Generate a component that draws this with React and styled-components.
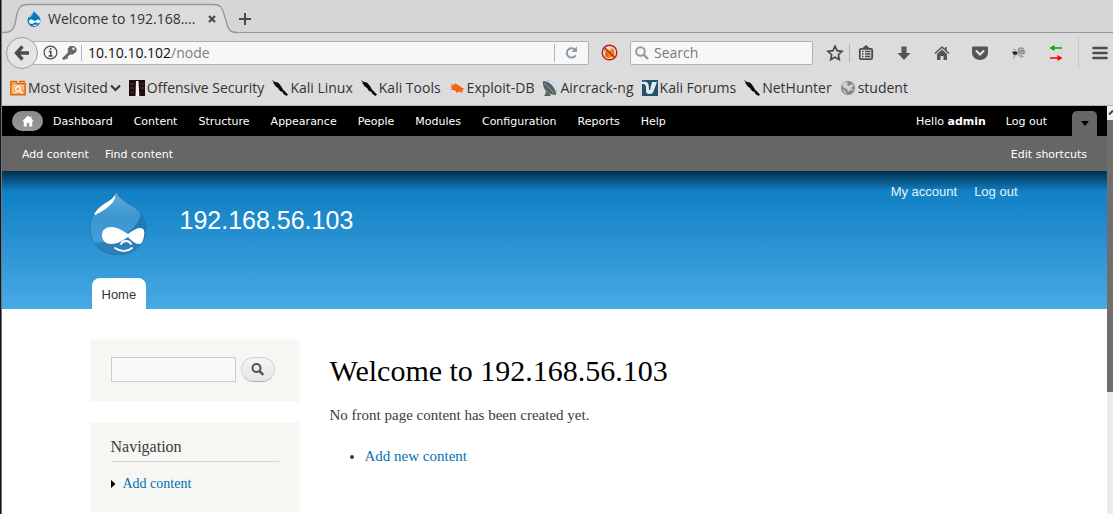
import React from 'react';
import styled, { createGlobalStyle } from 'styled-components';

const bookmarks = [
  { label: 'Most Visited', icon: 'folder', menu: true },
  { label: 'Offensive Security', icon: 'offsec' },
  { label: 'Kali Linux', icon: 'kali' },
  { label: 'Kali Tools', icon: 'kali' },
  { label: 'Exploit-DB', icon: 'exploit' },
  { label: 'Aircrack-ng', icon: 'aircrack' },
  { label: 'Kali Forums', icon: 'forums' },
  { label: 'NetHunter', icon: 'kali' },
  { label: 'student', icon: 'globe' },
];

const adminLinks = [
  'Dashboard',
  'Content',
  'Structure',
  'Appearance',
  'People',
  'Modules',
  'Configuration',
  'Reports',
  'Help',
];

const App = () => (
  <Window>
    <GlobalStyle />
    <TabStrip>
      <Tab>
        <TabShape />
        <Favicon />
        <TabTitle>Welcome to 192.168....</TabTitle>
        <PlainButton aria-label="Close tab">
          <svg width="8" height="8" viewBox="0 0 8 8">
            <path d="M1 1l6 6M7 1L1 7" stroke="#4a4a4a" strokeWidth="2.2" />
          </svg>
        </PlainButton>
      </Tab>
      <PlainButton aria-label="New tab">
        <svg width="12" height="12" viewBox="0 0 12 12">
          <path d="M6 0v12M0 6h12" stroke="#4a4a4a" strokeWidth="2" />
        </svg>
      </PlainButton>
    </TabStrip>
    <NavBar />
    <Bookmarks>
      {bookmarks.map((item) => (
        <Bookmark href="#" key={item.label}>
          <BookmarkIcon name={item.icon} />
          {item.label}
          {item.menu && (
            <svg width="11" height="8" viewBox="0 0 11 8">
              <path d="M1 1.500l4.500 4.500L10 1.500" fill="none" stroke="#3a3a3a" strokeWidth="2.2" />
            </svg>
          )}
        </Bookmark>
      ))}
    </Bookmarks>
    <Viewport>
      <Page>
        <AdminBar>
          <HomeLink href="#" aria-label="Home">
            <svg width="12" height="12" viewBox="0 0 12 12">
              <path d="M6 .5L0 6.5h1.8v5h3V8h2.4v3.5h3v-5H12L9.500 4V1.500H8.200v1.200z" fill="#fff" />
            </svg>
          </HomeLink>
          {adminLinks.map((label) => (
            <AdminLink href="#" key={label}>
              {label}
            </AdminLink>
          ))}
          <AdminUser>
            <AdminLink href="#">
              Hello <strong>admin</strong>
            </AdminLink>
            <AdminLink href="#">Log out</AdminLink>
            <DrawerToggle aria-label="Hide shortcuts">
              <svg width="8" height="5" viewBox="0 0 8 5">
                <path d="M0 0h8L4 5z" fill="#000" />
              </svg>
            </DrawerToggle>
          </AdminUser>
        </AdminBar>
        <Shortcuts>
          <AdminLink href="#">Add content</AdminLink>
          <AdminLink href="#">Find content</AdminLink>
          <EditLink href="#">Edit shortcuts</EditLink>
        </Shortcuts>
        <Header>
          <HeaderInner>
            <Branding>
              <DrupalLogo />
              <SiteName href="#">192.168.56.103</SiteName>
              <UserMenu>
                <UserLink href="#">My account</UserLink>
                <UserLink href="#">Log out</UserLink>
              </UserMenu>
            </Branding>
            <MainTab href="#">Home</MainTab>
          </HeaderInner>
        </Header>
        <Main>
          <Sidebar>
            <SearchBlock>
              <SearchInput type="text" aria-label="Search this site" />
              <SearchButton aria-label="Search">
                <svg width="13" height="13" viewBox="0 0 13 13">
                  <circle cx="5.5" cy="5" r="4" fill="none" stroke="#505050" strokeWidth="2" />
                  <path d="M8.300 7.800l4 4" stroke="#505050" strokeWidth="2.4" />
                </svg>
              </SearchButton>
            </SearchBlock>
            <Block>
              <BlockTitle>Navigation</BlockTitle>
              <MenuItem>
                <svg width="5" height="8" viewBox="0 0 5 8">
                  <path d="M0 0l4.5 4L0 8z" fill="#000" />
                </svg>
                <ContentLink href="#">Add content</ContentLink>
              </MenuItem>
            </Block>
          </Sidebar>
          <Content>
            <Title>Welcome to 192.168.56.103</Title>
            <Text>No front page content has been created yet.</Text>
            <List>
              <li>
                <ContentLink href="#">Add new content</ContentLink>
              </li>
            </List>
          </Content>
        </Main>
      </Page>
      <Scrollbar>
        <ScrollUp>
          <svg width="6" height="14" viewBox="0 0 6 14">
            <path d="M2 8.500l4-4" stroke="#444" strokeWidth="2" />
          </svg>
        </ScrollUp>
        <Thumb />
      </Scrollbar>
    </Viewport>
  </Window>
);

export default App;

const TabShape = () => (
  <TabOutline width="236" height="33" viewBox="0 0 236 33">
    <path
      d="M0 33C8 33 11 31 13 24L15 14C17 7 19 4.500 26 4.500H211C218 4.500 220 7 222 14L225 24C227 31 229 33 236 33z"
      fill="#dcdcdc"
    />
    <path
      d="M0 32.500C8 32.500 11 31 13 24L15 14C17 7 19 4.500 26 4.500H211C218 4.500 220 7 222 14L225 24C227 31 229 32.500 236 32.500"
      fill="none"
      stroke="#8f979f"
      strokeWidth="1.3"
    />
  </TabOutline>
);

const Favicon = () => (
  <svg width="16" height="16" viewBox="0 0 16 16">
    <path d="M8 0c.5 2.500 6.500 4.500 6.500 9.500A6.500 6.500 0 0 1 1.500 9.500C1.500 5 7.500 3.500 8 0z" fill="#0678be" />
    <path d="M7 2.500C6 4.500 3 5 2.500 7c1.500-1 4-1.500 4.500-4.500z" fill="#b5def5" />
    <path d="M3 10.500C3 8 6 8 9 10.300c3-3 5-2 5 0 0 2.700-2.500 2.200-4.500.7C7 13.500 3 13.500 3 10.500z" fill="#fff" />
    <path d="M7 14q2 1.300 4-.2" fill="none" stroke="#fff" />
  </svg>
);

const dropPath =
  'M27 0C29 6 34 9 40 13C51 19 57 27 57 37C57 53 45 64 29 64S1 53 1 37C1 28 5 20 13 14C20 9 25 8 27 0z';

const DrupalLogo = () => (
  <svg width="58" height="66" viewBox="0 0 58 66">
    <defs>
      <linearGradient id="drop" x1="0" y1="0" x2="0" y2="1">
        <stop offset="0" stopColor="#5fabdc" />
        <stop offset="0.4" stopColor="#3c96cf" />
        <stop offset="1" stopColor="#4ba4dc" />
      </linearGradient>
      <clipPath id="dropClip">
        <path d={dropPath} />
      </clipPath>
    </defs>
    <g clipPath="url(#dropClip)">
      <rect width="58" height="66" fill="url(#drop)" />
      <path d="M52 19C52 30 45 37 38 42L57 50V20z" fill="#2379b4" />
      <path d="M5 52Q29 50 38 42L57 44V66H13z" fill="#2c7fb9" />
      <path d="M26 3C27 8 24 12 20 15C16 19 11 21 6 24C4 22 5 19 8 16C14 11 23 10 26 3z" fill="#fff" />
    </g>
    <path d={dropPath} fill="none" stroke="#2574a9" strokeOpacity="0.8" />
    <path
      d="M13 44C13 39 17 36 22 36C29 36 34 40 39 43C43 40 47 37 51 37C55 37 56 40 55 45C54 50 53 53 50 53C46 53 43 50 39 46C33 50 29 53 22 53C16 53 13 49 13 44z"
      fill="#fff"
    />
    <path d="M32 53C34 49 40 49 42 53M26 57C32 61 38 61 43 57" fill="none" stroke="#fff" strokeWidth="1.8" strokeLinecap="round" />
  </svg>
);

const NavBar = () => (
  <Nav>
    <BackButton aria-label="Back">
      <svg width="16" height="16" viewBox="0 0 16 16">
        <path d="M8.500 1.500L2.500 8l6 6.500M3 8h12" fill="none" stroke="#4c4c4c" strokeWidth="3.4" />
      </svg>
    </BackButton>
    <UrlBox>
      <svg width="15" height="15" viewBox="0 0 15 15">
        <circle cx="7.5" cy="7.5" r="6.4" fill="none" stroke="#4c4c4c" strokeWidth="1.2" />
        <path d="M7.500 3v2M5.800 6.500h2v4M5.500 11h4.200" fill="none" stroke="#4c4c4c" strokeWidth="1.5" />
      </svg>
      <svg width="15" height="15" viewBox="0 0 15 15">
        <path d="M7.500 8L1 14.300" stroke="#666" strokeWidth="2.8" />
        <path d="M3 11.500l2.500 2" stroke="#666" strokeWidth="2" />
        <path d="M8 1h4l2.500 2.500v3L11 9.500H8L5.800 7.300V3.500z" fill="#666" />
        <circle cx="11.5" cy="3.8" r="1.2" fill="#f7f7f7" />
      </svg>
      <Divider $height="16px" />
      <Url>
        <b>10.10.10.102</b>/node
      </Url>
      <Divider $height="18px" />
      <ReloadButton aria-label="Reload">
        <svg width="13" height="13" viewBox="0 0 13 13">
          <path d="M9.800 3.500A4.700 4.700 0 1 0 10.600 9.300" fill="none" stroke="#8b98a5" strokeWidth="2" />
          <path d="M12 .5V6H6.500z" fill="#8b98a5" />
        </svg>
      </ReloadButton>
    </UrlBox>
    <PlainButton aria-label="Blocked bugs">
      <svg width="17" height="17" viewBox="0 0 17 17">
        <path d="M4 9l2-3 3 .5 2-2.500 2 2 .5 4-2 3-4 1-3-1z" fill="#ee8a00" />
        <path d="M3 6l3 2M5 13l1-2M13 12l-2-2M4 10h3" stroke="#a05c10" />
        <circle cx="8.5" cy="8.5" r="7.3" fill="none" stroke="#cf1518" strokeWidth="1.4" />
        <path d="M3.200 3.200l10.600 10.600" stroke="#cf1518" strokeWidth="1.4" />
      </svg>
    </PlainButton>
    <SearchBox>
      <svg width="14" height="14" viewBox="0 0 14 14">
        <circle cx="5.5" cy="5.5" r="4.3" fill="none" stroke="#999" strokeWidth="2" />
        <path d="M8.500 8.500l4.500 4.500" stroke="#999" strokeWidth="2.4" />
      </svg>
      <SearchField type="text" placeholder="Search" aria-label="Search the web" />
    </SearchBox>
    <Tools>
      <PlainButton aria-label="Bookmark this page">
        <svg width="16" height="16" viewBox="0 0 16 16">
          <path d="M8 1.200l2.100 4.500 4.900.6-3.600 3.400.9 4.900L8 12.200l-4.300 2.400.9-4.900L1 6.300l4.900-.6z" fill="none" stroke="#4c4c4c" strokeWidth="1.7" />
        </svg>
      </PlainButton>
      <Divider $height="18px" />
      <PlainButton aria-label="Bookmarks list">
        <svg width="16" height="16" viewBox="0 0 16 16">
          <rect x="1.8" y="3.8" width="12.4" height="10.4" rx="1.5" fill="none" stroke="#4c4c4c" strokeWidth="1.8" />
          <path d="M4 3.500L8 0l4 3.500z" fill="#4c4c4c" />
          <path d="M4 6.500h1.500M7 6.500h5.500M4 9h1.500M7 9h5.500M4 11.500h1.500M7 11.500h5.500" stroke="#4c4c4c" strokeWidth="1.3" />
        </svg>
      </PlainButton>
    </Tools>
    <PlainButton aria-label="Downloads">
      <svg width="16" height="16" viewBox="0 0 16 16">
        <path d="M5.500 1.500h5V8h4L8 15 1.500 8h4z" fill="#555" />
      </svg>
    </PlainButton>
    <PlainButton aria-label="Home page">
      <svg width="16" height="16" viewBox="0 0 16 16">
        <path d="M1 8.500L8 2l7 6.500M12 5V2" fill="none" stroke="#555" strokeWidth="1.6" />
        <path d="M8 4.500L3 9v6h3.500v-4h3v4H13V9z" fill="#555" />
      </svg>
    </PlainButton>
    <PlainButton aria-label="Pocket">
      <svg width="16" height="16" viewBox="0 0 16 16">
        <path d="M1 1.500h14q1 0 1 1V8c0 4-4 7-8 7S0 12 0 8V2.500q0-1 1-1z" fill="#555" />
        <path d="M4 5.500l4 4 4-4" fill="none" stroke="#e8e8e8" strokeWidth="2" />
      </svg>
    </PlainButton>
    <PlainButton aria-label="Tamper tool">
      <svg width="16" height="16" viewBox="0 0 16 16">
        <path d="M1 6l4 2 3-1M4 11l1-2M3 14l3-5 4 2 4 .5M8 7l2-4M9 8l6-2M6 5L3 4M11 10v3" fill="none" stroke="#999" />
        <ellipse cx="5" cy="8" rx="2.5" ry="1.8" fill="#222" />
        <ellipse cx="11" cy="4.5" rx="3" ry="1.7" fill="#b5b5b5" stroke="#777" strokeWidth="0.7" />
        <ellipse cx="11.5" cy="7.5" rx="3.5" ry="1.5" fill="#aaa" stroke="#777" strokeWidth="0.7" />
      </svg>
    </PlainButton>
    <PlainButton aria-label="Proxy switch">
      <svg width="16" height="16" viewBox="0 0 16 16">
        <path d="M5 3h9" stroke="#0a0" strokeWidth="1.5" />
        <path d="M1.500 3l5-3v6z" fill="#0a0" />
        <path d="M2 13h9" stroke="#f00" strokeWidth="1.5" />
        <path d="M14.500 13l-5-3v6z" fill="#f00" />
      </svg>
    </PlainButton>
    <MenuGroup>
      <Divider $height="32px" $faint />
      <PlainButton aria-label="Open menu">
        <svg width="16" height="14" viewBox="0 0 16 14">
          <path d="M1.500 2h13M1.500 7h13M1.500 12h13" stroke="#4c4c4c" strokeWidth="2.6" strokeLinecap="round" />
        </svg>
      </PlainButton>
    </MenuGroup>
  </Nav>
);

const icons = {
  folder: (
    <>
      <path d="M.8 14.800V1.500h5.500l1 2h7.900v11.300z" fill="#f5a55a" stroke="#df6a08" strokeWidth="1.4" />
      <path d="M9 1.500h6" stroke="#df6a08" strokeWidth="1.5" />
      <path d="M3 12.500v-7h10v4M3 12.500h5" fill="none" stroke="#fbd9b5" />
      <circle cx="8" cy="9" r="2.3" fill="none" stroke="#fff" strokeWidth="1.3" />
      <path d="M9.500 10.500l3 3" stroke="#fff" strokeWidth="1.4" />
    </>
  ),
  offsec: (
    <>
      <path d="M0 0h16v16H0z" fill="#200d0d" />
      <path d="M1 4h4M1 8h4M11 4h4M11 8h4M2 12h3" stroke="#4a2a2a" strokeWidth="1.5" />
      <path d="M7 1h2.500l.8 15H6.500z" fill="#f4f0ec" />
    </>
  ),
  kali: (
    <path d="M0 0l3 2 3 .5 3 3.500 2 3.500 5 5-1.500 1.500-3-2-1-2-2.500-1L6 8 2.500 5.500l1-.5L1 3.500l1-.5z" fill="#080808" />
  ),
  exploit: (
    <path d="M1 3l3 1.500 2 0 .5-1.500 1.500 1.500 3 1.500 2 2 2.500 0-2 1.500 1 2-2-.5.5 2.500-2.500-2-2 .5-1.500 1v-2L4 10 1 10l2.500-1.500L1 6.500l3-.5z" fill="#f2640f" />
  ),
  aircrack: (
    <>
      <path d="M5 0c6 0 11 6 10 14L9 12z" fill="#a9c6ee" />
      <path d="M6 2q6 2 7 9M8 1q5 3 6 9" fill="none" stroke="#e8f0fb" />
      <path d="M1 1c6 0 13 6 13 14C8 15 0 11 1 1z" fill="#59625c" />
      <path d="M3 11l1 2-2 3h7l-2-3z" fill="#59625c" />
      <path d="M2 3l10 10" stroke="#929c96" />
    </>
  ),
  forums: (
    <>
      <path d="M0 0h16v16H0z" fill="#24506b" />
      <path d="M0 2c6-1 7 1 7 8l1 0 2-8h5l-3 8c-1 3-2 4-4 4-4 0-4-2-4-5C4 6 4 4 0 4z" fill="#dfe9ee" />
    </>
  ),
  globe: (
    <>
      <circle cx="8" cy="8" r="7" fill="#858585" />
      <path d="M2 5l3-3 3 .5-1 2.500 2 1 3-2 2 2-2 1-1 3-3 2-1-3-3-1z" fill="#d2d2d2" />
      <path d="M3 10l2 2 1 2M12 11l1-2" fill="none" stroke="#c4c4c4" strokeWidth="1.5" />
    </>
  ),
};

const BookmarkIcon = ({ name }) => (
  <svg width="16" height="16" viewBox="0 0 16 16">
    {icons[name]}
  </svg>
);

const GlobalStyle = createGlobalStyle`
  * {
    box-sizing: border-box;
  }

  body {
    margin: 0;
    overflow: hidden;
  }

  a {
    text-decoration: none;
  }

  svg {
    display: block;
    flex-shrink: 0;
    overflow: visible;
  }
`;

const Window = styled.div`
  display: flex;
  flex-direction: column;
  min-height: 100vh;
  padding-left: 1px;
  border-left: 1px solid #08141f;
  background: linear-gradient(#777, #777) left / 1px 100% no-repeat #dcdcdc;
  font-family: 'Open Sans', 'Noto Sans', sans-serif;
  font-size: 14px;
  color: #333;
`;

const PlainButton = styled.button`
  display: flex;
  flex-shrink: 0;
  padding: 0;
  border: none;
  background: none;
`;

const ReloadButton = styled(PlainButton)`
  margin-left: 4px;
`;

const TabStrip = styled.div`
  display: flex;
  align-items: center;
  gap: 23px;
  height: 33px;
  padding-top: 5px;
  background: #d6d6d6;
  border-bottom: 1px solid #9a9a9a;
`;

const Tab = styled.div`
  position: relative;
  display: flex;
  align-items: center;
  width: 214px;
  height: 100%;
  padding-left: 24px;
  gap: 6px;

  > :not(:first-child) {
    z-index: 1;
  }
`;

const TabOutline = styled.svg`
  position: absolute;
  left: 0;
  bottom: -1px;
`;

const TabTitle = styled.span`
  flex: 1;
  white-space: nowrap;
`;

const Nav = styled.div`
  display: flex;
  align-items: center;
  height: 39px;
  padding: 0 5px 0 4px;
  gap: 22px;
`;

const BackButton = styled.button`
  display: flex;
  align-items: center;
  justify-content: center;
  flex-shrink: 0;
  z-index: 1;
  width: 32px;
  height: 32px;
  margin-right: -28px;
  padding: 0;
  border: 1px solid #9f9f9f;
  border-radius: 50%;
  background: #e4e4e4;
`;

const UrlBox = styled.div`
  display: flex;
  align-items: center;
  flex: 1;
  height: 24px;
  padding: 0 10px;
  gap: 4px;
  background: #f7f7f7;
  border: 1px solid #b0b0b0;
  border-radius: 2px;
  margin-right: -10px;
`;

const Url = styled.span`
  flex: 1;
  color: #808080;

  b {
    font-weight: 400;
    color: #111;
  }
`;

const Divider = styled.span`
  width: 1px;
  height: ${(props) => props.$height};
  margin-right: 2px;
  background: ${(props) => (props.$faint ? '#cacaca' : '#b4b4b4')};
`;

const SearchBox = styled.div`
  display: flex;
  align-items: center;
  width: 183px;
  height: 24px;
  margin: 0 -8px 0 -10px;
  padding: 0 4px;
  gap: 5px;
  background: #f7f7f7;
  border: 1px solid #b0b0b0;
  border-radius: 2px;
`;

const SearchField = styled.input`
  flex: 1;
  min-width: 0;
  padding: 0;
  border: none;
  background: none;
  font: inherit;

  &::placeholder {
    color: #777;
  }
`;

const Tools = styled.div`
  display: flex;
  align-items: center;
  gap: 6px;
`;

const MenuGroup = styled.div`
  display: flex;
  align-items: center;
  margin-left: -8px;
  gap: 11px;
`;

const Bookmarks = styled.div`
  display: flex;
  align-items: center;
  height: 34px;
  padding: 0 0 2px 8px;
  gap: 8px;
  border-bottom: 1px solid #b4b4b4;
`;

const Bookmark = styled.a`
  display: flex;
  align-items: center;
  gap: 2px;
  white-space: nowrap;
  color: #333;
`;

const Viewport = styled.div`
  display: flex;
  flex: 1;
`;

const Page = styled.div`
  flex: 1;
  background: #fff;
`;

const Scrollbar = styled.div`
  display: flex;
  flex-direction: column;
  width: 6px;
  background: #ebebeb;
`;

const ScrollUp = styled.div`
  height: 14px;
  background: #f0f0f0;
`;

const Thumb = styled.div`
  height: 272px;
  background: #706e6d;
`;

const AdminBar = styled.nav`
  display: flex;
  align-items: center;
  height: 30px;
  padding: 0 10px;
  gap: 1px;
  background: #000;
`;

const HomeLink = styled.a`
  display: flex;
  align-items: center;
  justify-content: center;
  width: 31px;
  height: 20px;
  margin-right: -1px;
  border-radius: 10px;
  background: linear-gradient(#8a8a8a, #999);
`;

const AdminLink = styled.a`
  padding: 2px 10px 0;
  font: 11px/20px 'DejaVu Sans', sans-serif;
  white-space: nowrap;
  color: #fff;
`;

const AdminUser = styled.div`
  display: flex;
  align-self: stretch;
  align-items: center;
  margin-left: auto;
`;

const DrawerToggle = styled.button`
  display: flex;
  align-items: center;
  justify-content: center;
  align-self: flex-end;
  width: 25px;
  height: 25px;
  margin-left: 15px;
  padding: 0;
  border: none;
  border-radius: 5px 5px 0 0;
  background: #666;
`;

const Shortcuts = styled.nav`
  display: flex;
  align-items: center;
  height: 35px;
  padding: 0 10px 0 15px;
  gap: 1px;
  background: #666;

  ${AdminLink} {
    padding: 2px 10px 0 5px;
  }
`;

const EditLink = styled(AdminLink)`
  margin-left: auto;
`;

const Header = styled.header`
  background:
    linear-gradient(rgba(0, 0, 0, 0.6), transparent 20px),
    linear-gradient(#0779bf, #48a9e4);
`;

const HeaderInner = styled.div`
  max-width: 960px;
  margin: 0 auto;
  padding: 20px 17px 0 14px;
`;

const Branding = styled.div`
  display: flex;
  align-items: flex-start;
  height: 87px;
`;

const SiteName = styled.a`
  margin-left: 33px;
  padding-top: 14px;
  font: 25px/30px 'Liberation Sans', sans-serif;
  color: #fff;
`;

const UserMenu = styled.div`
  display: flex;
  gap: 17px;
  margin-left: auto;
  margin-top: -9px;
`;

const UserLink = styled.a`
  font: 13px/20px 'Liberation Sans', sans-serif;
  color: #fff;
  opacity: 0.9;
`;

const MainTab = styled.a`
  display: block;
  width: fit-content;
  margin-left: 3px;
  padding: 2px 10px 0;
  border-radius: 8px 8px 0 0;
  background: #fff;
  font: 13px/29px 'Liberation Sans', sans-serif;
  color: #333;
`;

const Main = styled.main`
  display: flex;
  max-width: 960px;
  margin: 0 auto;
  padding: 30px 15px 0;
  gap: 30px;
  font-family: Georgia, 'Liberation Serif', serif;
`;

const Sidebar = styled.aside`
  display: flex;
  flex-direction: column;
  width: 210px;
  gap: 20px;
`;

const Block = styled.section`
  padding: 14px 20px 17px;
  border: 1px solid #f9f9f6;
  background: #f6f6f2;
`;

const SearchBlock = styled(Block).attrs({ as: 'form' })`
  display: flex;
  gap: 5px;
  padding: 17px 20px 19px;
`;

const SearchInput = styled.input`
  width: 125px;
  height: 25px;
  border: 1px solid #ccc;
  background: #f8f8f8;
`;

const SearchButton = styled.button`
  display: flex;
  align-items: center;
  justify-content: center;
  width: 34px;
  height: 25px;
  padding: 0;
  border: 1px solid #d2d2d2;
  border-bottom-color: #b0b0b0;
  border-radius: 13px;
  background: linear-gradient(#f4f4f4, #e6e6e6);
`;

const BlockTitle = styled.h2`
  margin: 0 0 12px;
  padding-bottom: 4px;
  border-bottom: 1px solid #d6d6d6;
  font-weight: 400;
  font-size: 16px;
  line-height: 20px;
  color: #3b3b3b;
`;

const MenuItem = styled.div`
  display: flex;
  align-items: center;
  gap: 7px;
  font-size: 14px;
  line-height: 20px;
`;

const ContentLink = styled.a`
  color: #0071b3;
`;

const Content = styled.section`
  flex: 1;
  padding-top: 14px;
  font-size: 15px;
  line-height: 22px;
  color: #3b3b3b;
`;

const Title = styled.h1`
  margin: 0;
  font-weight: 400;
  font-size: 30px;
  line-height: 36px;
  color: #000;
`;

const Text = styled.p`
  margin: 15px 0 19px;
`;

const List = styled.ul`
  margin: 0;
  padding-left: 35px;
`;
